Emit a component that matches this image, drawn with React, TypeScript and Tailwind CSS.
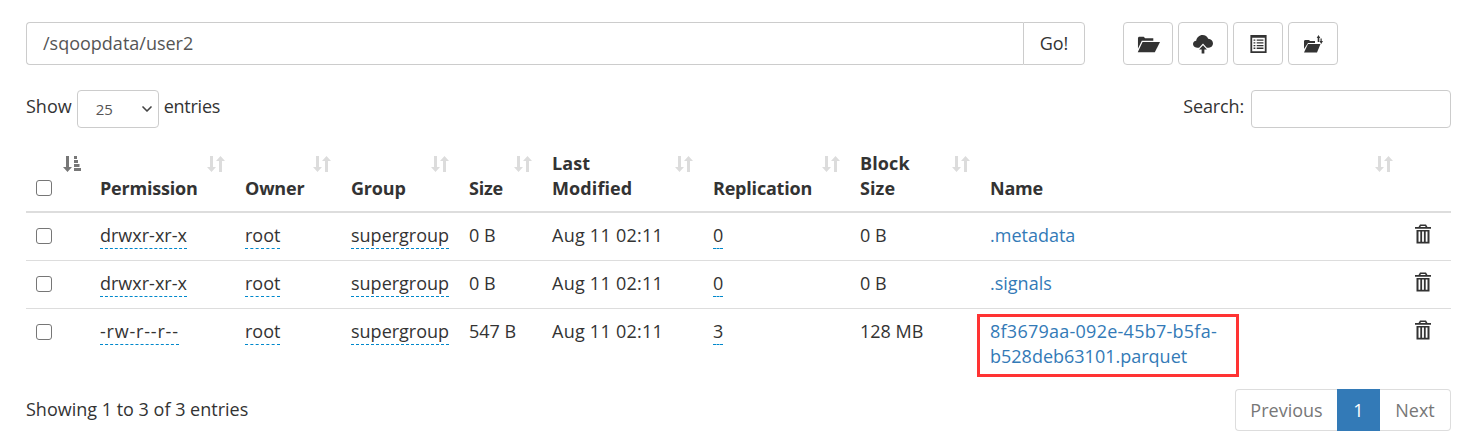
import React from 'react';
import { ChevronDown } from 'lucide-react';

const rows = [
  { perm: 'drwxr-xr-x', size: '0 B', repl: '0', block: '0 B', name: '.metadata' },
  { perm: 'drwxr-xr-x', size: '0 B', repl: '0', block: '0 B', name: '.signals' },
  { perm: '-rw-r--r--', size: '547 B', repl: '3', block: '128 MB', name: '8f3679aa-092e-45b7-b5fa-b528deb63101.parquet' },
];

const headers = [
  { label: 'Permission', w: 'w-[145px]' },
  { label: 'Owner', w: 'w-[106px]' },
  { label: 'Group', w: 'w-[118px]' },
  { label: 'Size', w: 'w-[83px]' },
  { label: 'Last Modified', w: 'w-[161px]' },
  { label: 'Replication', w: 'w-[147px]' },
  { label: 'Block Size', w: 'w-[130px]' },
  { label: 'Name', w: 'w-[423px]' },
];

const SortIcon = ({ active }: { active?: boolean }) => (
  <svg width="18" height="18" viewBox="0 0 18 18" className={active ? 'text-[#777]' : 'text-[#dcdcdc]'} fill="currentColor">
    <path d="M3 1h3v11h3l-4.500 5L0 12h3z" />
    {active ? (
      <path d="M11 1h3v3h-3zM11 5h4v3h-4zM11 9h5.500v3H11zM11 13h7v3h-7z" />
    ) : (
      <path d="M12 17h3V6h3l-4.500-5L9 6h3z" />
    )}
  </svg>
);

const FolderOpen = () => (
  <svg width="23" height="18" viewBox="0 0 24 18" fill="#333" className="ml-[1px]">
    <path d="M1 4V2.500L2 1.500h5l1.500 1.500H17v2.500H5L1 14z" />
    <path d="M5.800 6.800H24L18.600 17.500H0.800z" />
  </svg>
);

const CloudUpload = () => (
  <svg width="22" height="20" viewBox="0 0 24 22" fill="#333">
    <path d="M5.500 15C2.500 15 1 13 1 11c0-2 1.500-3.500 3.500-3.700C5 3.800 8 1 11.500 1c3 0 5.300 1.800 6.200 4.300C21 5.400 23 7.800 23 10.500 23 13 21 15 18.500 15h-2.300L12 10.500 7.700 15z" />
    <path d="M12 12.500l4.300 4.500h-2.800v4.500h-3V17H7.700z" />
  </svg>
);

const ListBox = () => (
  <svg width="17" height="18" viewBox="0 0 18 20">
    <path fill="#333" fillRule="evenodd" d="M0 0h18v20H0zM2 3v15h14V3z" />
    <path fill="#333" d="M3.500 5h2v1.500h-2zM7 5h7.500v1.500H7zM3.500 8h2v1.500h-2zM7 8h7.500v1.500H7zM3.500 11h2v1.500h-2zM7 11h7.500v1.500H7zM3.500 14h2v1.500h-2zM7 14h7.500v1.500H7z" />
  </svg>
);

const FolderSort = () => (
  <svg width="20" height="18" viewBox="0 0 20 18" fill="#333">
    <path d="M1 8V5.800L2 5h4l1 1h5v2H5L1 14z" />
    <path d="M5 9h12.500L14 17.500H1z" />
    <path d="M13.700 3L15.500 0l1.800 3h-1v4h-1.600V3z" />
    <path d="M17.500 3.500h1.200V6H20l-1.800 3-1.700-3h1z" />
  </svg>
);

const Trash = () => (
  <svg width="16" height="20" viewBox="0 0 16 20" fill="#333">
    <path fillRule="evenodd" d="M5 0.500h6l1.500 2.500H16v1.800H0V3h3.500zM6 2l-.7 1h5.400L10 2zM1.500 6h13v13.500h-13zM3.500 7.500v10.300h1.800V7.500zM7.100 7.500v10.300h1.800V7.500zM10.700 7.500v10.300h1.800V7.500z" />
  </svg>
);

const Box = () => (
  <span className="block w-4 h-4 rounded-[3px] border border-[#767676] bg-white" />
);

const Editable = ({ text, wide }: { text: string; wide?: boolean }) => (
  <span className={`inline-block align-top h-[26px] border-b border-dashed border-[#0088cc] ${wide ? 'tracking-[0.8px]' : ''}`}>{text}</span>
);

const App: React.FC = () => {
  return (
    <div className="w-[1482px] h-[444px] overflow-hidden bg-white pt-[22px] pl-[26px] pr-[31px] text-[18px] leading-[25px] text-[#333] font-['Open_Sans','Noto_Sans',sans-serif]">
      <div className="flex">
        <div className="flex w-[1059px] h-[43px]">
          <div className="flex-1 flex items-center pl-4 border border-[#ccc] rounded-l-[4px] border-r-0 text-[#555]">/sqoopdata/user2</div>
          <div className="w-[62px] flex items-center justify-center border border-[#ccc] rounded-r-[4px]">Go!</div>
        </div>
        <div className="flex gap-[5px] ml-[38px]">
          <div className="w-[50px] h-[43px] flex items-center justify-center border border-[#ccc] rounded-[4px]"><FolderOpen /></div>
          <div className="w-[50px] h-[43px] flex items-center justify-center border border-[#ccc] rounded-[4px]"><CloudUpload /></div>
          <div className="w-[50px] h-[43px] flex items-center justify-center border border-[#ccc] rounded-[4px]"><ListBox /></div>
          <div className="w-[50px] h-[43px] flex items-center justify-center border border-[#ccc] rounded-[4px]"><FolderSort /></div>
        </div>
      </div>

      <div className="flex justify-between items-center mt-[25px] h-[38px]">
        <div className="flex items-center gap-[5px]">
          <span className="mb-[6px]">Show</span>
          <div className="w-[82px] h-[38px] flex items-center justify-between pl-[18px] pr-[3px] border border-[#ccc] rounded-[4px] text-[#555] text-[15px]">
            <span className="mt-[1px]">25</span>
            <ChevronDown size={16} strokeWidth={2.5} className="text-[#444]" />
          </div>
          <span className="mb-[6px] tracking-[-0.25px]">entries</span>
        </div>
        <div className="flex items-center gap-[7px]">
          <span className="mb-[6px] tracking-[-0.15px]">Search:</span>
          <div className="w-[200px] h-[38px] border border-[#ccc] rounded-[4px]" />
        </div>
      </div>

      <table className="mt-[13px] w-[1425px] table-fixed border-collapse">
        <thead>
          <tr className="border-b-2 border-[#ddd] h-[71px]">
            <th className="relative w-[66px] p-2 align-bottom">
              <span className="absolute right-[11px] top-[14px]"><SortIcon active /></span>
              <span className="block pl-[2px] mb-[7px]"><Box /></span>
            </th>
            {headers.map((h) => (
              <th key={h.label} className={`relative ${h.w} p-2 pb-[10px] text-left align-bottom font-bold`}>
                <span className="absolute right-[12px] top-[14px]"><SortIcon /></span>
                {h.label === 'Last Modified' || h.label === 'Block Size' ? (
                  <span className="block w-[75px] tracking-[0.1px]">{h.label}</span>
                ) : (
                  <span className="tracking-[-0.2px]">{h.label}</span>
                )}
              </th>
            ))}
            <th className="w-[46px]" />
          </tr>
        </thead>
        <tbody>
          {rows.map((r, i) => (
            <tr key={r.name} className={i < 2 ? 'border-b border-[#ddd]' : ''}>
              <td className="p-2 pt-[10px] pb-[10px] align-top">
                <span className="block pl-[2px] mt-[5px]"><Box /></span>
              </td>
              <td className="p-2 pt-[10px] pb-[10px] align-top"><Editable text={r.perm} wide={i === 2} /></td>
              <td className="p-2 pt-[10px] pb-[10px] align-top"><Editable text="root" /></td>
              <td className="p-2 pt-[10px] pb-[10px] align-top"><Editable text="supergroup" /></td>
              <td className="p-2 pt-[10px] pb-[10px] align-top">{r.size}</td>
              <td className="p-2 pt-[10px] pb-[10px] align-top tracking-[0.25px]">Aug 11 02:11</td>
              <td className="p-2 pt-[10px] pb-[10px] align-top"><Editable text={r.repl} /></td>
              <td className="p-2 pt-[10px] pb-[10px] align-top">{r.block}</td>
              <td className="relative p-2 pt-[10px] pb-[12px] align-top">
                {i === 2 ? (
                  <span className="block w-[240px] text-[#337ab7]">
                    <span className="tracking-[0.25px]">8f3679aa-092e-45b7-b5fa-</span>b528deb63101.parquet
                  </span>
                ) : (
                  <span className="block w-[240px] text-[#337ab7]">{r.name}</span>
                )}
                {i === 2 && (
                  <span className="absolute left-[-5px] top-[5px] w-[262px] h-[63px] border-[3px] border-[#f33]" />
                )}
              </td>
              <td className="p-2 pt-[11px] align-top">
                <span className="block ml-[2px]"><Trash /></span>
              </td>
            </tr>
          ))}
        </tbody>
      </table>

      <div className="flex justify-between items-center mt-[8px] h-[42px]">
        <span className="-mt-[1px]">Showing 1 to 3 of 3 entries</span>
        <div className="flex h-[42px] text-[#777]">
          <div className="w-[102px] flex items-center justify-center border border-[#ddd] border-r-0 rounded-l-[4px]">Previous</div>
          <div className="w-[43px] flex items-center justify-center bg-[#337ab7] text-white">1</div>
          <div className="w-[71px] flex items-center justify-center border border-[#ddd] border-l-0 rounded-r-[4px]">Next</div>
        </div>
      </div>
    </div>
  );
};

export default App;
